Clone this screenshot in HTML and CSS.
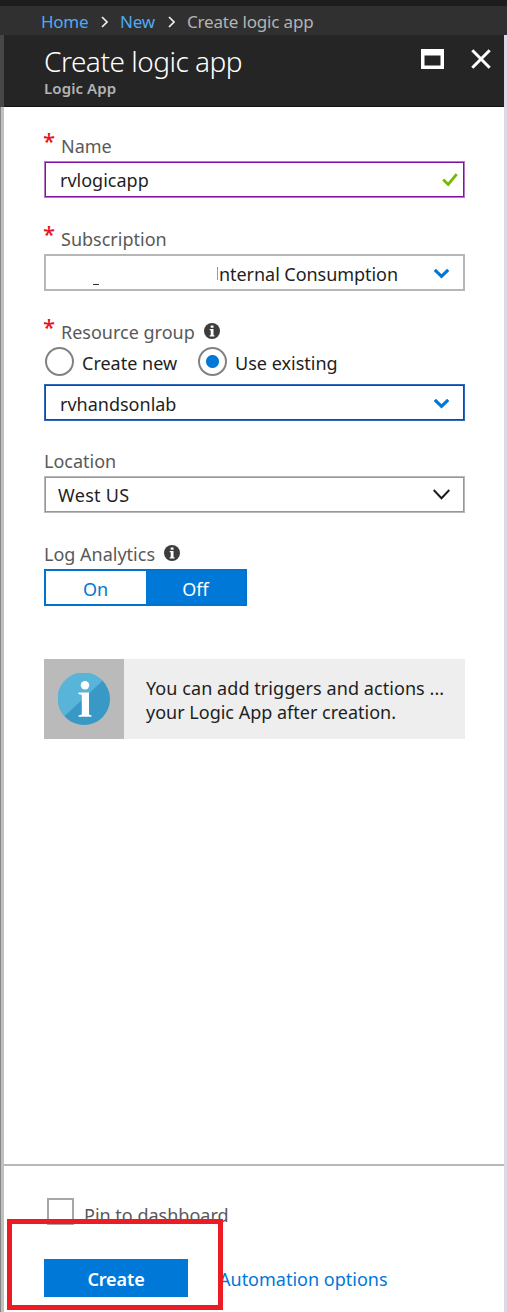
FILE: index.html
```html
<!DOCTYPE html>
<html lang="en">
<head>
<meta charset="utf-8">
<title>Create logic app</title>
<link rel="stylesheet" href="styles.css">
</head>
<body>
<div class="portal">
  <nav class="breadcrumb">
    <a class="crumb-home">Home</a>
    <svg class="crumb-arrow" width="7" height="12" viewBox="0 0 7 12"><path d="M1 1l5 5-5 5"/></svg>
    <a class="crumb-new">New</a>
    <svg class="crumb-arrow" width="7" height="12" viewBox="0 0 7 12"><path d="M1 1l5 5-5 5"/></svg>
    <span class="crumb-current">Create logic app</span>
  </nav>
  <div class="blade">
    <header class="blade-header">
      <div class="titles">
        <h1>Create logic app</h1>
        <p>Logic App</p>
      </div>
      <svg class="restore" width="23" height="20" viewBox="0 0 23 20"><path fill="#fff" fill-rule="evenodd" d="M0 0h23v20H0zM3.500 6.500v10h16v-10z"/></svg>
      <svg class="close" width="20" height="20" viewBox="0 0 20 20"><path d="M1.300 1.300l17.400 17.400M18.700 1.300L1.300 18.700" stroke="#fff" stroke-width="3" fill="none"/></svg>
    </header>
    <main class="form">
      <section class="field name">
        <div class="label"><span class="star">*</span><span class="t-name">Name</span></div>
        <div class="box valid"><span class="t-value-name">rvlogicapp</span>
          <svg class="check" width="16" height="14" viewBox="0 0 16 14"><path d="M1.200 6.500l5 5L14.700 1.200" stroke="#76b900" stroke-width="2.800" fill="none"/></svg>
        </div>
      </section>
      <section class="field subscription">
        <div class="label"><span class="star">*</span><span class="t-sub">Subscription</span></div>
        <div class="box plain"><span class="redacted"></span><span class="stem"></span><span class="t-value-sub">nternal Consumption</span>
          <svg class="chevron" width="17" height="12" viewBox="0 0 17 12"><path d="M1.800 1.800l6.700 6.500 6.700-6.500" stroke="#0078d7" stroke-width="3.200" fill="none"/></svg>
        </div>
      </section>
      <section class="field group">
        <div class="label"><span class="star">*</span><span class="t-group">Resource group</span>
          <svg class="info" width="16" height="16" viewBox="0 0 16 16"><circle cx="8" cy="8" r="8" fill="#3c3c3c"/><path fill="#fff" d="M6.700 2.500h2.800v2.300H6.700zM5.700 6h3.800v6.200h1V13.500H5.700v-1.300h1V7.300h-1z"/></svg>
        </div>
        <div class="radios">
          <span class="radio"></span><span class="t-create">Create new</span>
          <span class="radio on"></span><span class="t-existing">Use existing</span>
        </div>
        <div class="box focus"><span class="t-value-group">rvhandsonlab</span>
          <svg class="chevron" width="17" height="12" viewBox="0 0 17 12"><path d="M1.800 1.800l6.700 6.500 6.700-6.500" stroke="#0078d7" stroke-width="3.200" fill="none"/></svg>
        </div>
      </section>
      <section class="field location">
        <div class="label"><span class="t-loc">Location</span></div>
        <div class="box dark"><span class="t-value-loc">West US</span>
          <svg class="chevron" width="17" height="12" viewBox="0 0 17 12"><path d="M.7 1l7.800 8.200L16.300 1" stroke="#1c1c1c" stroke-width="2" fill="none"/></svg>
        </div>
      </section>
      <section class="field analytics">
        <div class="label"><span class="t-log">Log Analytics</span>
          <svg class="info" width="16" height="16" viewBox="0 0 16 16"><circle cx="8" cy="8" r="8" fill="#3c3c3c"/><path fill="#fff" d="M6.700 2.500h2.800v2.300H6.700zM5.700 6h3.800v6.200h1V13.500H5.700v-1.300h1V7.300h-1z"/></svg>
        </div>
        <div class="toggle"><span class="off-side"><span class="t-on">On</span></span><span class="on-side"><span class="t-off">Off</span></span></div>
      </section>
      <aside class="notice">
        <div class="notice-icon">
          <svg width="52" height="52" viewBox="0 0 52 52"><circle cx="26" cy="26" r="26" fill="#3999c6"/><path fill="#59b4d9" d="M44.500 7.700A26 26 0 1 0 6.500 43.200z"/><circle cx="27" cy="12.200" r="4.200" fill="#fff"/><path fill="#fff" d="M20.500 19.500H31v22l2.500 1v1.200H20.500v-1.200l3.300-1V22l-3.300-1z"/></svg>
        </div>
        <div class="notice-text"><span class="t-notice1">You can add triggers and actions ...</span><span class="t-notice2">your Logic App after creation.</span></div>
      </aside>
    </main>
    <footer class="footer">
      <div class="pin"><span class="checkbox"></span><span class="t-pin">Pin to dashboard</span></div>
      <div class="actions"><button class="create"><span class="t-button">Create</span></button><a class="t-auto">Automation options</a></div>
    </footer>
  </div>
  <div class="highlight"></div>
</div>
</body>
</html>
```
FILE: styles.css
```css
* { box-sizing: border-box; }
body {
  margin: 0;
  background: #fff;
  font: 18px/24px "Noto Sans", "Open Sans", sans-serif;
  color: #1e1e1e;
}
svg { display: block; flex: none; }
span, a { white-space: nowrap; }

.portal {
  position: relative;
  width: 507px;
  height: 1312px;
  display: flex;
  flex-direction: column;
  overflow: hidden;
}
.breadcrumb {
  height: 35px;
  flex: none;
  border-top: 6px solid #1d1d1d;
  background: #303030;
  padding: 2px 0 0 41px;
  display: flex;
  align-items: center;
  font-size: 17px;
  color: #b4b4b4;
}
.breadcrumb a { color: #4daaf5; }
.crumb-home { width: 60px; letter-spacing: -0.3px; }
.crumb-new { width: 35px; margin-left: 12px; letter-spacing: -0.2px; }
.crumb-new + .crumb-arrow { margin-left: 13px; }
.crumb-current { margin-left: 12px; letter-spacing: -0.17px; }
.crumb-arrow path { fill: none; stroke: #f0f0f0; stroke-width: 1.6; }

.blade {
  flex: 1;
  display: flex;
  flex-direction: column;
  border-right: 3px solid #dadae6;
  border-left: 1px solid #858585;
  box-shadow: inset 3px 0 #c2bfbf;
  padding-left: 3px;
}
.blade-header {
  height: 72px;
  flex: none;
  background: #252525;
  border-bottom: 1px solid #111;
  box-shadow: -4px 0 #474747;
  padding: 9px 13px 0 40px;
  display: flex;
  align-items: flex-start;
  color: #fff;
}
.titles { flex: 1; }
h1 { margin: 0; font-size: 28px; line-height: 34px; font-weight: 300; letter-spacing: -0.5px; white-space: nowrap; }
.blade-header p { margin: 0; font-size: 15px; line-height: 20px; font-weight: 600; letter-spacing: 0.1px; color: #b4b4b4; }
.restore { margin: 5px 27px 0 0; }
.close { margin-top: 5px; }

.form { flex: 1; padding: 25px 40px 0; }
.label { height: 29px; padding-bottom: 2px; display: flex; align-items: center; color: #595959; }
.star { width: 18px; margin-left: -1px; height: 29px; font-size: 22px; line-height: 18px; font-weight: 500; color: #e81123; }
.info { margin: -2px 0 0 9px; }
.field { margin-bottom: 27px; }
.group { margin-bottom: 26px; }
.box {
  width: 421px;
  height: 37px;
  border: 2px solid #b7b7b7;
  padding: 0 13px 0 14px;
  display: flex;
  align-items: center;
  justify-content: space-between;
}
.valid { border: 1px solid #b878c8; box-shadow: inset 0 0 0 1px #8510a3; padding: 0 6px 0 15px; }
.focus { border: 1px solid #2d69bd; box-shadow: inset 0 0 0 1px #0d49ad; padding: 2px 14px 0 15px; }
.dark { border: 1px solid #b8b8b8; box-shadow: inset 0 0 0 1px #979797; padding: 1px 14px 0 13px; }
.t-value-loc { letter-spacing: 0.3px; }
.subscription .box { justify-content: flex-start; padding-top: 2px; }
.subscription .chevron { margin-left: auto; }
.redacted { width: 157px; height: 1px; background: linear-gradient(#333, #333) 33px 0 / 6px 1px no-repeat; margin-top: 21px; }
.stem { width: 1px; height: 13px; background: #999; margin: 0 1px 0 0; }
.t-value-sub { letter-spacing: -0.05px; }
.radios { height: 33px; padding-bottom: 3px; display: flex; align-items: center; margin-bottom: 4px; }
.radio {
  width: 29px;
  height: 29px;
  margin: -2px 8px 0 1px;
  border: 1.500px solid #6e6e6e;
  border: 2px solid #828282;
  border-radius: 50%;
}
.radio.on { margin-left: 21px; background: radial-gradient(circle, #0078d7 6px, transparent 7px); }
.t-create, .t-existing { padding-top: 1px; }
.toggle { width: 203px; height: 37px; display: flex; border: 2px solid #0072d0; }
.toggle > span { flex: 1; padding: 2px 1px 0 0; display: flex; align-items: center; justify-content: center; color: #0078d7; }
.toggle .on-side { background: #0078d7; color: #fff; padding-right: 0; }
.notice { width: 421px; height: 80px; background: #eee; display: flex; margin-top: 53px; }
.notice-icon { width: 80px; background: #bababa; display: flex; align-items: center; justify-content: center; }
.notice-text { padding: 17px 0 0 22px; display: flex; flex-direction: column; }
.t-notice1 { letter-spacing: 0.07px; }

.footer { height: 148px; border-top: 2px solid #b8b8b8; padding: 32px 40px 0; }
.pin { height: 61px; display: flex; align-items: flex-start; color: #595959; }
.checkbox { width: 27px; height: 27px; border: 2px solid #a6a6a6; margin: 0 10px 0 3px; }
.t-pin { margin-top: 5px; }
.actions { display: flex; align-items: center; color: #0078d7; }
.create { width: 144px; height: 38px; border: 0; background: #0078d7; color: #fff; font: 600 18px/24px "Noto Sans", sans-serif; letter-spacing: -0.1px; padding: 2px 0 0; margin-right: 31px; }
.t-auto { padding-top: 2px; }
.highlight {
  position: absolute;
  left: 7px;
  top: 1219px;
  width: 216px;
  height: 91px;
  border: 5px solid #ed1c24;
}
```
